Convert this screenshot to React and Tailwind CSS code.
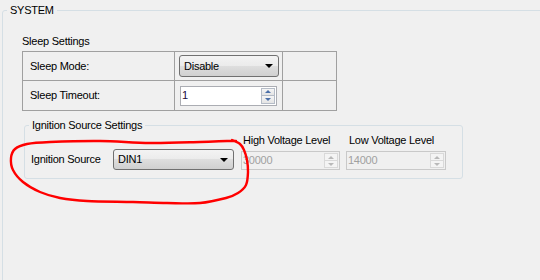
import React from 'react';

// freehand red annotation, traced from the screenshot
const loop = [
  [236, 141], [227, 141], [200, 142], [150, 143], [100, 141], [50, 142], [27, 144], [15, 149],
  [11, 158], [13, 170], [23, 182], [40, 192], [60, 198], [87, 201], [133, 202], [167, 203],
  [200, 203], [226, 198], [238, 193], [246, 185], [248, 172], [247, 160], [244, 150], [240, 144],
  [232, 140],
];

function smooth(pts) {
  let d = `M${pts[0][0]},${pts[0][1]}`;
  for (let i = 0; i < pts.length - 1; i++) {
    const p0 = pts[i - 1] || pts[i];
    const p1 = pts[i];
    const p2 = pts[i + 1];
    const p3 = pts[i + 2] || p2;
    const c1 = [p1[0] + (p2[0] - p0[0]) / 6, p1[1] + (p2[1] - p0[1]) / 6];
    const c2 = [p2[0] - (p3[0] - p1[0]) / 6, p2[1] - (p3[1] - p1[1]) / 6];
    d += ` C${c1[0]},${c1[1]} ${c2[0]},${c2[1]} ${p2[0]},${p2[1]}`;
  }
  return d;
}

function Combo({ value, className }) {
  return (
    <div className={`flex items-center justify-between rounded-[3px] border border-[#707070] bg-[linear-gradient(#f3f3f3,#ebebeb_50%,#dedede_50%,#d0d0d0)] pl-[4px] pr-[5px] ${className}`}>
      <span>{value}</span>
      <span className="h-0 w-0 border-x-[4px] border-t-[4px] border-x-transparent border-t-black" />
    </div>
  );
}

function Arrow({ up, disabled }) {
  return up ? (
    <span className={`h-0 w-0 border-x-[3px] border-b-[3px] border-x-transparent ${disabled ? 'border-b-[#b9b9b9]' : 'border-b-[#4b6fa8]'}`} />
  ) : (
    <span className={`h-0 w-0 border-x-[3px] border-t-[3px] border-x-transparent ${disabled ? 'border-t-[#b9b9b9]' : 'border-t-[#4b6fa8]'}`} />
  );
}

function Spin({ value, disabled, className }) {
  const btn = disabled
    ? 'border-[#d9d9d9] bg-[#f4f4f4]'
    : 'border-[#b5bcc7] bg-[linear-gradient(#f6f6f6,#e4e4e4)]';
  return (
    <div className={`flex border ${disabled ? 'border-[#c9c9c9] bg-[#f0f0f0] text-[#a0a0a0]' : 'border-[#abadb3] bg-white text-[#200a3a]'} ${className}`}>
      <span className="flex flex-1 items-center pl-[1px]">{value}</span>
      <div className="flex w-[15px] flex-col py-[1px] pr-[1px]">
        <div className={`flex flex-1 items-center justify-center border ${btn}`}>
          <Arrow up disabled={disabled} />
        </div>
        <div className={`flex flex-1 items-center justify-center border border-t-0 ${btn}`}>
          <Arrow disabled={disabled} />
        </div>
      </div>
    </div>
  );
}

export default function App() {
  return (
    <div className="relative h-[280px] w-[540px] overflow-hidden bg-[#f0f0f0] font-['Liberation_Sans',Arial,sans-serif] text-[11px] leading-[13px] tracking-[-0.25px] text-black">
      <fieldset className="ml-[2px] mt-[4px] h-[330px] w-[600px] rounded-[3px] border border-[#d5dfe5]">
        <legend className="ml-[4px] px-[3px]">SYSTEM</legend>
        <div className="pl-[19px] pt-[18px]">
          <div>Sleep Settings</div>
          <div className="mt-[3px] grid w-[315px] grid-cols-[152px_108px_1fr] border-l border-t border-[#a0a0a0]">
            <div className="flex h-[29px] items-center border-b border-r border-[#a0a0a0] pl-[7px]">Sleep Mode:</div>
            <div className="flex h-[29px] items-center border-b border-r border-[#a0a0a0] pl-[4px]">
              <Combo value="Disable" className="h-[22px] w-[100px]" />
            </div>
            <div className="h-[29px] border-b border-r border-[#a0a0a0]" />
            <div className="flex h-[30px] items-center border-b border-r border-[#a0a0a0] pl-[7px]">Sleep Timeout:</div>
            <div className="flex h-[30px] items-center border-b border-r border-[#a0a0a0] pl-[5px]">
              <Spin value="1" className="h-[20px] w-[97px]" />
            </div>
            <div className="h-[30px] border-b border-r border-[#a0a0a0]" />
          </div>

          <fieldset className="ml-[2px] mt-[8px] w-[439px] rounded-[3px] border border-[#d5dfe5]">
            <legend className="ml-[4px] px-[3px]">Ignition Source Settings</legend>
            <div className="flex items-end pb-[8px] pl-[6px] pt-[2px]">
              <div className="flex h-[21px] w-[82px] items-center">Ignition Source</div>
              <Combo value="DIN1" className="h-[21px] w-[121px]" />
              <div className="ml-[7px] flex flex-col">
                <span className="pl-[2px]">High Voltage Level</span>
                <Spin value="30000" disabled className="mt-[4px] h-[19px] w-[99px]" />
              </div>
              <div className="ml-[6px] flex flex-col">
                <span className="pl-[3px]">Low Voltage Level</span>
                <Spin value="14000" disabled className="mt-[4px] h-[19px] w-[100px]" />
              </div>
            </div>
          </fieldset>
        </div>
      </fieldset>

      <svg className="pointer-events-none absolute left-0 top-0" width="540" height="280">
        <path d={smooth(loop)} fill="none" stroke="#ff0000" strokeWidth="2.4" strokeLinecap="round" strokeLinejoin="round" />
      </svg>
    </div>
  );
}
